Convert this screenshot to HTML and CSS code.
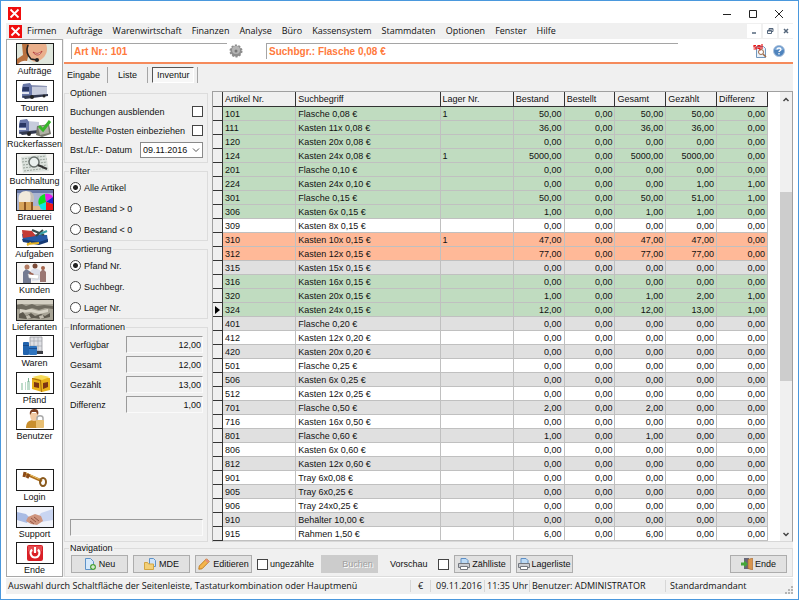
FILE: index.html
```
<!DOCTYPE html>
<html lang="de">
<head>
<meta charset="utf-8">
<title>Pfand - Inventur</title>
<link rel="stylesheet" href="styles.css">
</head>
<body>
<div class="window">
  <!-- Titelleiste -->
  <div class="titlebar">
    <svg class="logo" viewBox="0 0 13 13"><path fill="#f00d0d" d="M0 0h13v13H0z"/><path stroke="#fff" stroke-width="1.8" d="M2.500 2.500l8 8M10.500 2.500l-8 8"/></svg>
    <div class="winbuttons">
      <button type="button" aria-label="Minimieren"><svg viewBox="0 0 10 10"><path d="M1 5.500h8"/></svg></button>
      <button type="button" aria-label="Maximieren"><svg viewBox="0 0 10 10"><path d="M1.500 1.500h7v7h-7z"/></svg></button>
      <button type="button" aria-label="Schließen"><svg viewBox="0 0 10 10"><path d="M1 1l8 8M9 1l-8 8"/></svg></button>
    </div>
  </div>
  <!-- Hauptmenü -->
  <nav class="menubar">
    <svg class="logo" viewBox="0 0 13 13"><path fill="#f00d0d" d="M0 0h13v13H0z"/><path stroke="#fff" stroke-width="1.8" d="M2.500 2.500l8 8M10.500 2.500l-8 8"/></svg>
    <a href="#">Firmen</a>
    <a href="#">Aufträge</a>
    <a href="#">Warenwirtschaft</a>
    <a href="#">Finanzen</a>
    <a href="#">Analyse</a>
    <a href="#">Büro</a>
    <a href="#">Kassensystem</a>
    <a href="#">Stammdaten</a>
    <a href="#">Optionen</a>
    <a href="#">Fenster</a>
    <a href="#">Hilfe</a>
    <div class="mdibuttons">
      <button type="button" aria-label="Fenster minimieren"><svg viewBox="0 0 8 8"><path d="M2 6h4"/></svg></button>
      <button type="button" aria-label="Fenster wiederherstellen"><svg viewBox="0 0 8 8"><path stroke-width="1" d="M1.500 3.500h4v3h-4zM3 3V1.500h4v3H6M1.500 4h4M3 2h4"/></svg></button>
      <button type="button" aria-label="Fenster schließen"><svg viewBox="0 0 8 8"><path d="M2 2l4 4M6 2l-4 4"/></svg></button>
    </div>
  </nav>

  <div class="content">
    <!-- Seitenleiste -->
    <nav class="sidebar">
      <a href="#">
        <svg viewBox="0 0 36 20"><path fill="#dfe6dc" d="M0 0h36v20H0z"/><path fill="#b9713f" d="M5 0h10l-3 9-2 8-5 3H0v-5l6-4z"/><path fill="#eab08c" d="M12 0h17c2 5 1 10-3 14-4 4-9 5-12 2-4-5-4-11-2-16z"/><path fill="#8c4a32" d="M16 1l5 1M24 1l3 1"/><path fill="#fff" stroke="#b5403a" d="M16 8c3 2 6 2 9-1-1 4-6 6-9 1z"/><path fill="none" stroke="#222" stroke-width="1.500" d="M11 1c-2 5-1 10 3 14l6 1"/><circle cx="20" cy="16" r="2" fill="#222"/><path fill="#f4f4f4" d="M1 20c4-4 9-4 13-1l2 1z"/></svg>
        <span>Aufträge</span>
      </a>
      <a href="#">
        <svg viewBox="0 0 36 20"><path fill="#fff" d="M0 0h36v20H0z"/><path fill="#c7ccdc" d="M13 4l17 1v9l-16 2z"/><path fill="#8e96b5" d="M13 4l17 1v1l-17 0z"/><path fill="#6a78a8" d="M6 3l7-1 2 3v12H5V7z"/><path fill="#2a3763" d="M6 6h6v4H5z"/><path fill="#e1e5ef" d="M5 11h7v2H5z"/><path fill="#333a50" d="M5 15l26-2v2L8 18z"/><circle cx="15" cy="16" r="2" fill="#222"/><circle cx="27" cy="15" r="1.500" fill="#222"/></svg>
        <span>Touren</span>
      </a>
      <a href="#">
        <svg viewBox="0 0 36 20"><path fill="#fff" d="M0 0h36v20H0z"/><path fill="#c7ccdc" d="M10 4l12 1v9l-11 3z"/><path fill="#6a78a8" d="M3 3l7-1 2 3v12H2V7z"/><path fill="#2a3763" d="M3 6h6v4H2z"/><path fill="#e1e5ef" d="M2 11h7v2H2z"/><path fill="#333a50" d="M2 15l20-2v3L5 18z"/><circle cx="12" cy="17" r="2" fill="#222"/><path fill="#77776c" d="M20 9l12-2 2 10-9 3-6-2z"/><path fill="#b1b1a6" d="M21 10l10-2 1 8-9 2z"/><path fill="none" stroke="#37b52a" stroke-width="3" d="M22 9l4 4 7-9"/></svg>
        <span>Rückerfassen</span>
      </a>
      <a href="#">
        <svg viewBox="0 0 36 20"><path fill="#f5f5f2" d="M0 0h36v20H0z"/><path fill="#dce2dd" d="M4 3l25-3 3 17-26 2z"/><path stroke="#9aa39b" stroke-dasharray="2 1" d="M5 5l24-3M5 8l25-3M6 11l24-3M6 14l24-3M7 17l24-3"/><circle cx="17" cy="8" r="5" fill="#e9efed" stroke="#68706c" stroke-width="1.500"/><path stroke="#333" stroke-width="2" d="M21 11l9 4"/></svg>
        <span>Buchhaltung</span>
      </a>
      <a href="#">
        <svg viewBox="0 0 36 20"><path fill="#a9b4d2" d="M0 0h36v20H0z"/><path fill="#6878a6" d="M0 0h36v3H0z"/><path fill="#d8a45a" d="M2 12h14v8H2z"/><path fill="#8a5523" d="M7 12h2v8H7zM14 12h2v8h-2z"/><path fill="#f1e9dc" d="M2 12C0 4 5 1 9 1s9 3 7 11z"/><path fill="#c5bfb6" d="M12 1c5 2 6 6 4 11h-3c1-4 1-8-1-11z"/><path fill="#dfb98a" d="M16 16h7v4h-7z"/><path fill="#10e8e0" d="M29 12l-7 3c1 3 3 5 6 5h1z"/><path fill="#10df20" d="M29 12l-7 3c-2-5 1-10 6-11z"/><path fill="#e81ae8" d="M29 12l-1-8c4-1 7 1 8 3z"/><path fill="#2222d0" d="M29 12l7-5v7z"/><path fill="#f01818" d="M29 12l7 2v6h-7z"/></svg>
        <span>Brauerei</span>
      </a>
      <a href="#">
        <svg viewBox="0 0 36 20"><path fill="#fff" d="M0 0h36v20H0z"/><path fill="#2559a5" d="M5 7l25 1 1 6-9 3-16-4z"/><path fill="#163a75" d="M5 12l17 3 9-3v3l-9 3-16-3z"/><path fill="#c33a35" d="M5 3l10 1 4 5-13 2z"/><path stroke="#374b4b" stroke-width="2" d="M15 3l12 5M26 3l-7 6"/><path stroke="#37a0a8" stroke-width="2" d="M23 7l7-3"/><path stroke="#e2b023" stroke-width="2" d="M10 17l12-1M10 18l4-2"/></svg>
        <span>Aufgaben</span>
      </a>
      <a href="#">
        <svg viewBox="0 0 36 20"><path fill="#f7f5f3" d="M0 0h36v20H0z"/><path fill="#747b91" d="M6 9l3-3 5 3v11H6z"/><circle cx="10" cy="4" r="2.500" fill="#b37c62"/><path fill="#dcdfea" d="M14 7l4-2 5 2v10l-8 1z"/><circle cx="18" cy="3" r="2.500" fill="#7c4c37"/><path fill="#9b7772" d="M23 9l3-3 3 3v10h-6z"/><circle cx="26" cy="5" r="2" fill="#a7654c"/><path fill="#fff" stroke="#bbb" stroke-width=".5" d="M11 11l11 1-1 4-9-1z"/><path fill="#9d6250" d="M13 9l4 2-1 1-4-1z"/></svg>
        <span>Kunden</span>
      </a>
      <a href="#">
        <svg viewBox="0 0 36 20"><path fill="#a8a496" d="M0 0h36v20H0z"/><path fill="#d3cfc2" d="M0 0h36v4H0z"/><path fill="#6f6b5f" d="M0 5l5-1 4 2 6-2 5 2 7-1 9 1v3l-8-1-6 2-7-2-6 2-9-1z"/><path fill="#d8d4c7" d="M3 9l6 1 5-1 8 2 9-2v3l-9 2-8-2-11 1z"/><path fill="#5d594e" d="M2 14l4-2 3 4 5-3 4 3 6-2 4 2 5-3v4l-9 2-7-1-8 1-7-1z"/><path fill="#c4bfb1" d="M9 16l3-1 2 3-4 1zM22 16l4-1 1 3-4 1z"/></svg>
        <span>Lieferanten</span>
      </a>
      <a href="#">
        <svg viewBox="0 0 36 20"><path fill="#fff" d="M0 0h36v20H0z"/><path fill="#dfe0e4" stroke="#8c8e96" stroke-width=".7" d="M13 1h12v14H13z"/><path stroke="#9fa1a9" stroke-width=".6" d="M17 1v14M21 1v14M13 5h12M13 10h12"/><path fill="#3a3d44" d="M14 15h12v3H14z"/><rect x="6" y="6" width="6" height="13" rx="1" fill="#2264ae"/><path fill="#194b8a" d="M6 9h6v1H6z"/><rect x="12" y="10" width="8" height="9" rx="1" fill="#2f75bf"/><path fill="#1b4e90" d="M12 12h8v1h-8z"/></svg>
        <span>Waren</span>
      </a>
      <a href="#">
        <svg viewBox="0 0 36 20"><path fill="#fff" d="M0 0h36v20H0z"/><path fill="#bedccb" d="M4 10h2v7H4zM8 9h1v8H8zM10 8h3v9h-3z"/><path fill="#7eb297" d="M11 5h1v4h-1z"/><path fill="#e9b21b" d="M15 5l18 0 0 12-8 2-10-3z"/><path fill="#a86d0c" d="M15 5l9 2 1 12h-1l-1-11-8-2z"/><path fill="#7c3413" d="M17 9l5 1v5l-5-1zM26 10l5-1v5l-5 2z"/><path fill="#f7db59" d="M15 4l9-2 9 2-8 3z"/></svg>
        <span>Pfand</span>
      </a>
      <a href="#">
        <svg viewBox="0 0 36 20"><path fill="#fff" d="M0 0h36v20H0z"/><path fill="#c98f2e" d="M9 19c0-6 3-8 8-8s8 3 8 8z"/><path fill="#f2c9a3" d="M13 4h8c0 5-1 8-4 8s-4-3-4-8z"/><path fill="#7c3f22" d="M13 6c-1-5 2-6 5-6s4 3 3 6l-2-3-4 0z"/><path fill="none" stroke="#a9a9a9" stroke-width="1.500" d="M20 12V9c0-3 6-3 6 0v3"/><rect x="19" y="11" width="8" height="8" rx="1" fill="#e8bf73"/></svg>
        <span>Benutzer</span>
      </a>
      <div class="spacer"></div>
      <a href="#">
        <svg viewBox="0 0 36 20"><path fill="#fff" d="M0 0h36v20H0z"/><path stroke="#b06f1d" stroke-width="3" d="M9 4l16 7"/><path stroke="#ecc466" d="M9 3l15 7"/><path stroke="#8c4b16" stroke-width="3" d="M8 2l-1 5M12 4l-2 4"/><ellipse cx="26" cy="12" rx="3" ry="4" fill="none" stroke="#8a5a1d" stroke-width="2"/></svg>
        <span>Login</span>
      </a>
      <a href="#">
        <svg viewBox="0 0 36 20"><path fill="#f1f3fa" d="M0 0h36v20H0z"/><path fill="#a9bbe4" d="M0 5l9 2 4 4-3 5-10-3z"/><path fill="#c9d5f1" d="M36 2l-12 4-3 4 3 5 12-2z"/><path fill="#cf957f" d="M11 10l7-3 6 2 2 5-6 4-6-1-5-3z"/><path fill="none" stroke="#955847" d="M14 11l5 4M17 10l5 4M13 14l4 3"/></svg>
        <span>Support</span>
      </a>
      <a href="#">
        <svg viewBox="0 0 36 20"><path fill="#fff" d="M0 0h36v20H0z"/><rect x="10" y="2" width="16" height="16" rx="2" fill="#d91f26"/><path fill="#ef6a6d" d="M11 3h14v5c-5 2-9 2-14 0z" opacity=".6"/><path fill="none" stroke="#fff" stroke-width="2" d="M15 6.500c-3 3-1 8 3 8s6-5 3-8M18 4v6"/></svg>
        <span>Ende</span>
      </a>
    </nav>

    <main class="main">
      <header class="header">
        <input class="titlefield artnr" type="text" value="Art Nr.: 101" aria-label="Art Nr." readonly>
        <button type="button" class="iconbutton" aria-label="Einstellungen"><svg viewBox="0 0 14 14"><circle cx="7" cy="7" r="5.500" fill="#8d8d8d" stroke="#8d8d8d" stroke-width="2" stroke-dasharray="2 1.450"/><circle cx="7" cy="6" r="4" fill="#b4b4b4"/><circle cx="7" cy="7" r="1.500" fill="#777"/></svg></button>
        <input class="titlefield suchbgr" type="text" value="Suchbgr.: Flasche 0,08 €" aria-label="Suchbegriff" readonly>
        <div class="headericons">
          <button type="button" class="iconbutton" aria-label="SQL"><svg viewBox="0 0 14 14"><path fill="#e8f1fa" stroke="#7297bd" d="M3.500 2.500h7l2 2v9h-9z"/><circle cx="8" cy="8" r="2.500" fill="#fff" stroke="#9c6a48"/><path stroke="#9c6a48" stroke-width="1.500" d="M10 10l3 3"/><path fill="none" stroke="#e81515" stroke-width="1.200" d="M3 1.500H1v1.500h2v2H.5M7 6.500V1.500H5V4.500h2M9 0v5"/></svg></button>
          <button type="button" class="iconbutton" aria-label="Hilfe"><svg viewBox="0 0 14 14"><circle cx="7" cy="7" r="5.500" fill="#4e83bd" stroke="#a9c0dc"/><path fill="#7ba7d6" d="M2.500 6c1-5 8-5 9 0z"/><path fill="none" stroke="#fff" stroke-width="1.300" d="M5 5.500C5 3.500 9 3.500 9 5.500c0 1.300-2 1.200-2 2.500M7 9v1.500"/></svg></button>
        </div>
      </header>

      <div class="tabs">
        <button type="button">Eingabe</button>
        <button type="button">Liste</button>
        <button type="button" class="active">Inventur</button>
      </div>

      <div class="work">
        <div class="options">
          <fieldset>
            <legend>Optionen</legend>
            <div class="line"><label for="ausblenden">Buchungen ausblenden</label><input type="checkbox" id="ausblenden"></div>
            <div class="line"><label for="posten">bestellte Posten einbeziehen</label><input type="checkbox" id="posten"></div>
            <div class="line"><label for="datum">Bst./LF.- Datum</label><select id="datum"><option>09.11.2016</option></select></div>
          </fieldset>
          <fieldset>
            <legend>Filter</legend>
            <label class="radio"><input type="radio" name="filter" checked>Alle Artikel</label>
            <label class="radio"><input type="radio" name="filter">Bestand &gt; 0</label>
            <label class="radio"><input type="radio" name="filter">Bestand &lt; 0</label>
          </fieldset>
          <fieldset>
            <legend>Sortierung</legend>
            <label class="radio"><input type="radio" name="sort" checked>Pfand Nr.</label>
            <label class="radio"><input type="radio" name="sort">Suchbegr.</label>
            <label class="radio"><input type="radio" name="sort">Lager Nr.</label>
          </fieldset>
          <fieldset class="info">
            <legend>Informationen</legend>
            <div class="infoline"><label for="verf">Verfügbar</label><input type="text" id="verf" value="12,00" readonly></div>
            <div class="infoline"><label for="ges">Gesamt</label><input type="text" id="ges" value="12,00" readonly></div>
            <div class="infoline"><label for="gez">Gezählt</label><input type="text" id="gez" value="13,00" readonly></div>
            <div class="infoline"><label for="diff">Differenz</label><input type="text" id="diff" value="1,00" readonly></div>
            <input type="text" class="message" aria-label="Meldung" readonly>
          </fieldset>
        </div>

        <div class="grid">
          <div class="tablebox">
            <table>
              <colgroup><col class="c-mark"><col class="c-nr"><col class="c-such"><col class="c-nr"><col class="c-num"><col class="c-num"><col class="c-num"><col class="c-num"><col class="c-num"></colgroup>
              <thead>
                <tr><th></th><th>Artikel Nr.</th><th>Suchbegriff</th><th>Lager Nr.</th><th>Bestand</th><th>Bestellt</th><th>Gesamt</th><th>Gezählt</th><th>Differenz</th></tr>
              </thead>
              <tbody>
                <tr class="green"><th></th><td>101</td><td>Flasche 0,08 €</td><td>1</td><td>50,00</td><td>0,00</td><td>50,00</td><td>50,00</td><td>0,00</td></tr>
                <tr class="green"><th></th><td>111</td><td>Kasten 11x 0,08 €</td><td></td><td>36,00</td><td>0,00</td><td>36,00</td><td>36,00</td><td>0,00</td></tr>
                <tr class="green"><th></th><td>120</td><td>Kasten 20x 0,08 €</td><td></td><td>0,00</td><td>0,00</td><td>0,00</td><td>0,00</td><td>0,00</td></tr>
                <tr class="green"><th></th><td>124</td><td>Kasten 24x 0,08 €</td><td>1</td><td>5000,00</td><td>0,00</td><td>5000,00</td><td>5000,00</td><td>0,00</td></tr>
                <tr class="green"><th></th><td>201</td><td>Flasche 0,10 €</td><td></td><td>0,00</td><td>0,00</td><td>0,00</td><td>0,00</td><td>0,00</td></tr>
                <tr class="green"><th></th><td>224</td><td>Kasten 24x 0,10 €</td><td></td><td>0,00</td><td>0,00</td><td>0,00</td><td>1,00</td><td>1,00</td></tr>
                <tr class="green"><th></th><td>301</td><td>Flasche 0,15 €</td><td></td><td>50,00</td><td>0,00</td><td>50,00</td><td>51,00</td><td>1,00</td></tr>
                <tr class="green"><th></th><td>306</td><td>Kasten 6x 0,15 €</td><td></td><td>1,00</td><td>0,00</td><td>1,00</td><td>1,00</td><td>0,00</td></tr>
                <tr><th></th><td>309</td><td>Kasten 8x 0,15 €</td><td></td><td>0,00</td><td>0,00</td><td>0,00</td><td>0,00</td><td>0,00</td></tr>
                <tr class="orange"><th></th><td>310</td><td>Kasten 10x 0,15 €</td><td>1</td><td>47,00</td><td>0,00</td><td>47,00</td><td>47,00</td><td>0,00</td></tr>
                <tr class="orange"><th></th><td>312</td><td>Kasten 12x 0,15 €</td><td></td><td>77,00</td><td>0,00</td><td>77,00</td><td>77,00</td><td>0,00</td></tr>
                <tr><th></th><td>315</td><td>Kasten 15x 0,15 €</td><td></td><td>0,00</td><td>0,00</td><td>0,00</td><td>0,00</td><td>0,00</td></tr>
                <tr class="green"><th></th><td>316</td><td>Kasten 16x 0,15 €</td><td></td><td>0,00</td><td>0,00</td><td>0,00</td><td>0,00</td><td>0,00</td></tr>
                <tr class="green"><th></th><td>320</td><td>Kasten 20x 0,15 €</td><td></td><td>1,00</td><td>0,00</td><td>1,00</td><td>2,00</td><td>1,00</td></tr>
                <tr class="green current"><th></th><td>324</td><td>Kasten 24x 0,15 €</td><td></td><td>12,00</td><td>0,00</td><td>12,00</td><td>13,00</td><td>1,00</td></tr>
                <tr><th></th><td>401</td><td>Flasche 0,20 €</td><td></td><td>0,00</td><td>0,00</td><td>0,00</td><td>0,00</td><td>0,00</td></tr>
                <tr><th></th><td>412</td><td>Kasten 12x 0,20 €</td><td></td><td>0,00</td><td>0,00</td><td>0,00</td><td>0,00</td><td>0,00</td></tr>
                <tr><th></th><td>420</td><td>Kasten 20x 0,20 €</td><td></td><td>0,00</td><td>0,00</td><td>0,00</td><td>0,00</td><td>0,00</td></tr>
                <tr><th></th><td>501</td><td>Flasche 0,25 €</td><td></td><td>0,00</td><td>0,00</td><td>0,00</td><td>0,00</td><td>0,00</td></tr>
                <tr><th></th><td>506</td><td>Kasten 6x 0,25 €</td><td></td><td>0,00</td><td>0,00</td><td>0,00</td><td>0,00</td><td>0,00</td></tr>
                <tr><th></th><td>512</td><td>Kasten 12x 0,25 €</td><td></td><td>0,00</td><td>0,00</td><td>0,00</td><td>0,00</td><td>0,00</td></tr>
                <tr><th></th><td>701</td><td>Flasche 0,50 €</td><td></td><td>2,00</td><td>0,00</td><td>2,00</td><td>0,00</td><td>0,00</td></tr>
                <tr><th></th><td>716</td><td>Kasten 16x 0,50 €</td><td></td><td>0,00</td><td>0,00</td><td>0,00</td><td>0,00</td><td>0,00</td></tr>
                <tr><th></th><td>801</td><td>Flasche 0,60 €</td><td></td><td>1,00</td><td>0,00</td><td>1,00</td><td>0,00</td><td>0,00</td></tr>
                <tr><th></th><td>806</td><td>Kasten 6x 0,60 €</td><td></td><td>0,00</td><td>0,00</td><td>0,00</td><td>0,00</td><td>0,00</td></tr>
                <tr><th></th><td>812</td><td>Kasten 12x 0,60 €</td><td></td><td>0,00</td><td>0,00</td><td>0,00</td><td>0,00</td><td>0,00</td></tr>
                <tr><th></th><td>901</td><td>Tray 6x0,08 €</td><td></td><td>0,00</td><td>0,00</td><td>0,00</td><td>0,00</td><td>0,00</td></tr>
                <tr><th></th><td>905</td><td>Tray 6x0,25 €</td><td></td><td>0,00</td><td>0,00</td><td>0,00</td><td>0,00</td><td>0,00</td></tr>
                <tr><th></th><td>906</td><td>Tray 24x0,25 €</td><td></td><td>0,00</td><td>0,00</td><td>0,00</td><td>0,00</td><td>0,00</td></tr>
                <tr><th></th><td>910</td><td>Behälter 10,00 €</td><td></td><td>0,00</td><td>0,00</td><td>0,00</td><td>0,00</td><td>0,00</td></tr>
                <tr><th></th><td>915</td><td>Rahmen 1,50 €</td><td></td><td>6,00</td><td>0,00</td><td>6,00</td><td>0,00</td><td>0,00</td></tr>
              </tbody>
            </table>
          </div>
          <div class="scrollbar">
            <svg viewBox="0 0 12 14"><path d="M3.500 9L6 6.500 8.500 9"/></svg>
            <div class="track"><div class="thumb"></div></div>
            <svg viewBox="0 0 12 14"><path d="M3.500 6L6 8.500 8.500 6"/></svg>
          </div>
        </div>
      </div>

      <!-- Navigation -->
      <fieldset class="navigation">
        <legend>Navigation</legend>
        <div class="buttons">
          <button type="button"><svg viewBox="0 0 12 12"><path fill="#d6e9fb" stroke="#5d92c8" d="M1.500.5h5l3 3v8h-8z"/><circle cx="9" cy="9" r="3" fill="#4da33b"/><path stroke="#fff" d="M7 9h4M9 7v4"/></svg>Neu</button>
          <button type="button"><svg viewBox="0 0 12 12"><path fill="#cfe3f8" stroke="#5d92c8" d="M5.500.5h4l2 2v6h-6z"/><path fill="#f2cf78" stroke="#d3a541" d="M.5 4.500h3l1 1.500h5v5.500h-9z"/></svg>MDE</button>
          <button type="button"><svg viewBox="0 0 12 12"><path fill="#f4b54b" stroke="#c27f24" d="M8.500.8l2.700 2.700L4 10.800.8 11.200 1.300 8z"/><path fill="#e58c7b" d="M8.500.8l2.700 2.700-1.500 1.500L7 2.300z"/></svg>Editieren</button>
          <label><input type="checkbox">ungezählte</label>
          <button type="button" class="book" disabled>Buchen</button>
          <label class="preview">Vorschau<input type="checkbox"></label>
          <button type="button"><svg viewBox="0 0 12 12"><path fill="#bcdaf6" stroke="#5f8fc4" d="M3 .5h5l2 2V6H3z"/><path fill="#c9ccd2" stroke="#73777f" d="M.5 5.500h11v4H.500z"/><path fill="#fff" stroke="#73777f" d="M2.500 8.500h7v3h-7z"/></svg>Zählliste</button>
          <button type="button"><svg viewBox="0 0 12 12"><path fill="#bcdaf6" stroke="#5f8fc4" d="M3 .5h5l2 2V6H3z"/><path fill="#c9ccd2" stroke="#73777f" d="M.5 5.500h11v4H.500z"/><path fill="#fff" stroke="#73777f" d="M2.500 8.500h7v3h-7z"/></svg>Lagerliste</button>
          <button type="button" class="end"><svg viewBox="0 0 12 12"><path fill="#667" d="M3 0h5v11H3z"/><path fill="#d9954d" stroke="#a6672b" stroke-width=".6" d="M7 1.500L11.500 0v12L7 10.500z"/><path fill="#46a63a" d="M0 4.500h3V2.500l4 3.500-4 3.500v-2H0z"/></svg>Ende</button>
        </div>
      </fieldset>
    </main>
  </div>

  <footer class="statusbar">
    <span class="hint">Auswahl durch Schaltfläche der Seitenleiste, Tastaturkombination oder Hauptmenü</span>
    <span class="currency">€</span>
    <span class="date">09.11.2016</span>
    <span class="time">11:35 Uhr</span>
    <span class="user">Benutzer: ADMINISTRATOR</span>
    <span class="client">Standardmandant</span>
    <svg class="grip" viewBox="0 0 8 8"><path fill="#b5b5b5" d="M6 0h2v2H6zM3 3h2v2H3zM6 3h2v2H6zM0 6h2v2H0zM3 6h2v2H3zM6 6h2v2H6z"/></svg>
  </footer>
</div>
</body>
</html>
```
FILE: styles.css
```
* {
	box-sizing:border-box;
}
body {
	margin:0;
	font-family:"Liberation Sans", Arial, sans-serif;
	font-size:9px;
	line-height:12px;
	color:#111;
}
a {
	color:inherit;
	text-decoration:none;
}
button, input, select {
	margin:0;
	padding:0;
	border:0;
	border-radius:0;
	font:inherit;
	color:inherit;
	background:none;
}
svg {
	display:block;
	flex:none;
}
.window {
	display:flex;
	flex-direction:column;
	min-height:100vh;
	padding:0 5px 5px;
	border:1px solid #4a98dd;
	background-color:#fff;
}
.logo {
	width:13px;
	height:13px;
}

/* Titelleiste und Menü */
.titlebar {
	display:flex;
	align-items:center;
	justify-content:space-between;
	height:22px;
	padding:3px 9px 0 2px;
}
.winbuttons {
	display:flex;
	gap:16px;
}
.winbuttons svg {
	width:10px;
	height:10px;
	fill:none;
	stroke:#222;
}
.menubar {
	display:flex;
	align-items:center;
	gap:10px;
	height:16px;
	padding-left:3px;
	background-color:#f0f0f0;
	font-family:"Open Sans", "Noto Sans", sans-serif;
}
.menubar .logo {
	margin-right:-5px;
}
.mdibuttons {
	display:flex;
	gap:2px;
	margin-left:auto;
}
.mdibuttons button {
	width:14px;
	height:14px;
	padding:3px;
	background-color:#fff;
}
.mdibuttons svg {
	width:8px;
	height:8px;
	fill:none;
	stroke:#55677c;
	stroke-width:1.5;
}

/* Seitenleiste */
.content {
	display:flex;
	flex:1;
}
.sidebar {
	display:flex;
	flex-direction:column;
	justify-content:space-between;
	width:57px;
	padding-top:3px;
	border:1px solid #a8a8a8;
	text-align:center;
}
.sidebar a {
	display:flex;
	flex-direction:column;
	align-items:center;
	white-space:nowrap;
}
.sidebar svg {
	width:38px;
	height:22px;
	border:1px solid #1c1c1c;
}
.sidebar .spacer {
	height:22px;
}

/* Kopfzeile */
.main {
	display:flex;
	flex:1;
	flex-direction:column;
	min-width:0;
	padding-left:1px;
	background-color:#f0f0f0;
}
.header {
	display:flex;
	align-items:center;
	height:25px;
	padding:0 7px;
	border-bottom:2px solid #f58a5b;
	background-color:#fff;
}
.titlefield {
	height:16px;
	padding-left:2px;
	border-top:1px solid #a5a5a5;
	border-left:1px solid #a5a5a5;
	font-size:10px;
	font-weight:bold;
	color:#ff7a3c;
}
.artnr {
	width:156px;
	margin-right:2px;
}
.suchbgr {
	flex:1;
	margin-left:23px;
}
.iconbutton svg {
	width:14px;
	height:14px;
}
.headericons {
	display:flex;
	gap:5px;
	margin-left:75px;
}
.tabs {
	display:flex;
	align-items:center;
	height:20px;
	padding-top:2px;
}
.tabs button {
	min-width:40px;
	height:16px;
	padding:0 10px;
	border-right:1px solid #a5a5a5;
	text-align:left;
}
.tabs button:first-child {
	padding:0 7px 0 3px;
}
.tabs .active {
	margin-left:4px;
	padding:0 3px 0 4px;
	border:1px solid #fff;
	border-top-color:#555;
	border-left-color:#555;
	background-color:#f7f7f7;
}
.tabs::after {
	content:"";
	height:16px;
	margin-left:3px;
	border-left:1px solid #a5a5a5;
}

/* Optionen links */
.work {
	display:flex;
	flex:1;
	padding-top:3px;
}
fieldset {
	min-width:0;
	margin:0;
	padding:0 4px 0 5px;
	border:1px solid #dcdcdc;
}
legend {
	height:12px;
	margin-left:-1px;
	padding:0 1px;
}
.options {
	display:flex;
	flex-direction:column;
	gap:2px;
	width:144px;
}
.options .line {
	display:flex;
	align-items:center;
	justify-content:space-between;
	height:19px;
}
.options fieldset:first-child {
	padding-top:3px;
	padding-bottom:3px;
}
.options .radio {
	display:flex;
	align-items:center;
	gap:3px;
	height:21px;
}
input[type=checkbox], input[type=radio] {
	appearance:none;
	width:11px;
	height:11px;
	border:1px solid #444;
	background-color:#fff;
}
input[type=radio] {
	border-radius:50%;
}
input[type=radio]:checked {
	background-image:radial-gradient(#222 0, #222 2px, #fff 3px);
}
#datum {
	appearance:none;
	width:63px;
	height:16px;
	padding-left:2px;
	border:1px solid #8a8a8a;
	background:#fff url("data:image/svg+xml,%3Csvg xmlns='http://www.w3.org/2000/svg' viewBox='0 0 8 8'%3E%3Cpath fill='none' stroke='%23555' d='M1 2.500l3 3 3-3'/%3E%3C/svg%3E") no-repeat right 2px center / 8px 8px;
}
.options .info {
	display:flex;
	flex:1;
	flex-direction:column;
	gap:3px;
	padding-top:3px;
	padding-bottom:5px;
}
.infoline {
	display:flex;
	align-items:center;
	justify-content:space-between;
}
.infoline input, .message {
	height:17px;
	padding-right:1px;
	border:1px solid #fafafa;
	border-top-color:#9a9a9a;
	border-left-color:#9a9a9a;
	text-align:right;
}
.infoline input {
	width:77px;
}
.message {
	margin-top:auto;
}

/* Tabelle */
.grid {
	display:flex;
	flex:1;
	min-width:0;
	margin:4px 0 0 4px;
	border:1px solid #a0a0a0;
	border-bottom-color:#d8d8d8;
	background-color:#fff;
}
.tablebox {
	flex:1;
	min-width:0;
	padding-right:12px;
}
table {
	width:100%;
	border-collapse:separate;
	border-spacing:0;
	table-layout:fixed;
}
.c-mark {
	width:10px;
}
.c-nr {
	width:13.200%;
}
.c-such {
	width:26%;
}
th, td {
	height:14px;
	padding:0 2px;
	font-weight:normal;
	text-align:left;
	white-space:nowrap;
}
td {
	border-right:1px solid #c0c0c0;
	border-bottom:1px solid #c0c0c0;
}
th {
	border-right:1px solid #333;
	border-bottom:1px solid #333;
	background-color:#f0f0f0;
}
thead th {
	height:15px;
}
td:nth-child(n+5) {
	text-align:right;
}
tbody tr:nth-child(even) {
	background-color:#e0e0e0;
}
tbody tr.green {
	background-color:#c0dcc0;
}
tbody tr.orange {
	background-color:#ffb998;
}
.current th::before {
	content:"";
	display:block;
	width:0;
	border:4px solid transparent;
	border-left:5px solid #000;
	border-right:0;
}
.scrollbar {
	display:flex;
	flex-direction:column;
	width:12px;
	background-color:#f0f0f0;
}
.scrollbar svg {
	width:12px;
	height:14px;
	fill:none;
	stroke:#444;
	stroke-width:1.5;
}
.track {
	display:flex;
	flex:1;
	flex-direction:column;
}
.track::before {
	content:"";
	flex:86;
}
.track::after {
	content:"";
	flex:146;
}
.thumb {
	flex:190;
	background-color:#cdcdcd;
}

/* Navigation unten */
.navigation {
	padding:0 5px 2px 6px;
}
.navigation legend {
	margin-left:-2px;
}
.buttons {
	display:flex;
	align-items:center;
	gap:5px;
	height:20px;
}
.buttons button {
	display:flex;
	align-items:center;
	justify-content:center;
	gap:3px;
	width:57px;
	height:18px;
	border:1px solid #adadad;
	background-color:#e1e1e1;
}
.buttons button:nth-last-child(-n+3) {
	gap:2px;
}
.buttons svg {
	width:12px;
	height:12px;
}
.buttons label {
	display:flex;
	align-items:center;
	gap:2px;
}
.buttons .book {
	margin-left:2px;
	padding-left:16px;
	border-color:#ccc;
	background-color:#ccc;
	color:#a0a0a0;
	text-shadow:1px 1px #fff;
}
.buttons .preview {
	gap:10px;
	margin-left:7px;
}
.buttons .end {
	margin-left:auto;
}

/* Statusleiste */
.statusbar {
	display:flex;
	align-items:center;
	height:16px;
	margin-top:1px;
	background-color:#f0f0f0;
	font-family:"Open Sans", "Noto Sans", sans-serif;
	white-space:nowrap;
}
.statusbar span {
	padding:0 2px;
	border-left:1px solid #d7d7d7;
}
.statusbar .hint {
	flex:1;
	border:0;
}
.statusbar .currency {
	width:20px;
	text-align:center;
}
.statusbar .date {
	width:54px;
	padding-left:5px;
}
.statusbar .time {
	width:45px;
}
.statusbar .user {
	width:136px;
}
.statusbar .client {
	width:120px;
	padding-left:4px;
}
.grip {
	align-self:flex-end;
	width:8px;
	height:8px;
}
```
